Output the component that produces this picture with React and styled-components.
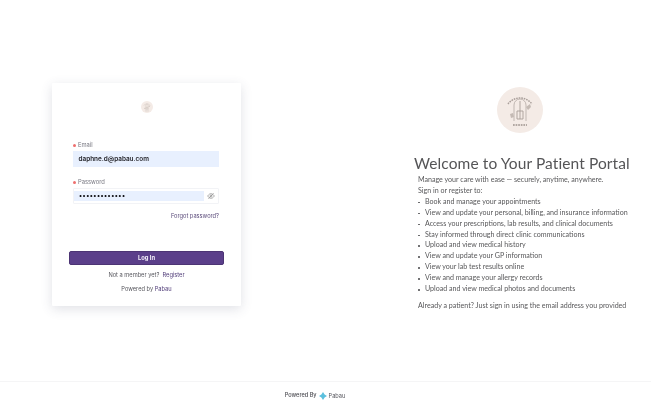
import React from 'react';
import styled, { createGlobalStyle } from 'styled-components';

const Global = createGlobalStyle`
  html, body { margin: 0; padding: 0; background: #fff; }
  body { font-family: Inter, "Liberation Sans", sans-serif; }
`;
const Page = styled.div`
  width: 651px; height: 408px; display: flex; flex-direction: column; overflow: hidden;
  filter: blur(0.3px);
`;
const Main = styled.main`
  height: 381px; display: flex; align-items: flex-start; box-sizing: border-box; padding: 83px 0 0 52px;
`;
const Card = styled.section`
  width: 189px; height: 223px; flex: none; box-sizing: border-box; background: #fff;
  box-shadow: 0 3px 12px rgba(60, 70, 100, 0.16); border-radius: 1px;
  padding: 18px 17px 0 17px; display: flex; flex-direction: column;
`;
const LogoRow = styled.div`display: flex; justify-content: center; height: 40px;`;
const Field = styled.div`
  display: flex; flex-direction: column; padding: 0 5px 0 4px; margin-bottom: 11px;
`;
const Label = styled.label`
  font-size: 5.8px; line-height: 8px; color: #777780; margin-bottom: 2px; display: flex; gap: 2px; align-items: center; height: 8px;
  &::before { content: ''; width: 3px; height: 3px; border-radius: 50%; background: #ee6f6e; }
`;
const EmailInput = styled.div`
  height: 16px; background: #e8f0fe; color: #25252b; font-size: 6.4px; font-weight: 600;
  line-height: 16px; padding-left: 5.5px;
`;
const PasswordBox = styled.div`
  height: 16px; border: 1px solid #f2f3f6; box-sizing: border-box; display: flex; align-items: center; border-radius: 1px;
`;
const PasswordFill = styled.div`
  flex: 1; height: 10px; background: #e8f0fe; color: #141418; font-size: 6.6px; font-weight: 700; line-height: 10px; letter-spacing: 0.45px; padding-left: 5px;
`;
const Eye = styled.span`
  width: 13px; flex: none; margin-right: 1px; display: flex; justify-content: center; color: #888;
`;
const Forgot = styled.a`
  align-self: flex-end; margin: -3px 5px 0 0; font-size: 5.7px; line-height: 8px; color: #5a4a7a;
`;
const LoginButton = styled.button`
  margin: 31px 0 0 0; height: 14px; width: 155px; padding: 0; border: 1px solid #4c3474; border-radius: 2px;
  background: #5b3f8a; color: #f4f0fa; font: 700 5.8px/12px Inter, sans-serif;
`;
const Foot = styled.p`
  margin: ${p => p.$mt}px 0 0; text-align: center; font-size: 5.7px; line-height: 8px; color: #55555c;
`;
const Link = styled.span`color: #4f3b78;`;
const Info = styled.section`
  margin: 4px 0 0 173px; width: 216px; flex: none; display: flex; flex-direction: column;
  color: #58585a; font-family: Lato, Inter, sans-serif;
`;
const BigLogo = styled.div`align-self: center; height: 46px; margin-bottom: 20px; margin-right: 5px;`;
const Title = styled.h1`
  margin: 0; font: 400 15.5px/21px Lato, Inter, sans-serif; color: #555557; white-space: nowrap; letter-spacing: 0.1px;
`;
const Body = styled.div`
  margin: 1px 0 0 4px; font-size: 7.1px; line-height: 10.9px; white-space: nowrap;
`;
const List = styled.ul`
  margin: 0; padding: 0; list-style: none;
`;
const Item = styled.li`
  position: relative; padding-left: 7px;
  &::before { content: ''; position: absolute; left: 0; top: 5px; width: 1.5px; height: 1.5px; background: #58585a; border-radius: 50%; }
`;
const Closing = styled.p`margin: 6.5px 0 0;`;
const Footer = styled.footer`
  height: 27px; border-top: 1px solid #f5f5f6; box-sizing: border-box; display: flex; align-items: center; justify-content: center; gap: 2px;
  color: #4c4c52; padding: 2px 21px 0 0;
`;
const FootPower = styled.span`font-size: 5.6px; font-weight: 500; position: relative; top: -1px;`;
const FootBrand = styled.span`font-size: 5.6px; color: #55555c;`;

const CircleLogo = ({ size }) => (
  <svg width={size} height={size} viewBox="0 0 46 46">
    <circle cx="23" cy="23" r="23" fill="#f4ebe6" />
    <path d="M11 17 A15 15 0 0 1 35 17" fill="none" stroke="#a89e99" strokeWidth="1.4" strokeDasharray="1.6 .9" />
    <path d="M17 34 V18 a6 6 0 0 1 12 0 V34" fill="none" stroke="#b4aaa5" strokeWidth=".8" />
    <path d="M23 14 v18 M20 24 h6 v8 h-6z" fill="none" stroke="#a89e99" strokeWidth=".9" />
    <path d="M29 20 l4 -3 1 3 -3 3z M13 27 l3 -1 1 4 -3 1z" fill="#c4bab4" />
    <path d="M16 38 H30" stroke="#9c928d" strokeWidth="1.3" strokeDasharray="1.7 .9" />
  </svg>
);

const items = [
  'Book and manage your appointments',
  'View and update your personal, billing, and insurance information',
  'Access your prescriptions, lab results, and clinical documents',
  'Stay informed through direct clinic communications',
  'Upload and view medical history',
  'View and update your GP information',
  'View your lab test results online',
  'View and manage your allergy records',
  'Upload and view medical photos and documents',
];

export default function App() {
  return (
    <Page>
      <Global />
      <Main>
        <Card>
          <LogoRow><CircleLogo size={12} /></LogoRow>
          <Field>
            <Label>Email</Label>
            <EmailInput>daphne.d@pabau.com</EmailInput>
          </Field>
          <Field>
            <Label>Password</Label>
            <PasswordBox>
              <PasswordFill>•••••••••••••</PasswordFill>
              <Eye>
                <svg width="8" height="8" viewBox="0 0 24 24" fill="none" stroke="currentColor" strokeWidth="2">
                  <path d="M2 12s4-7 10-7 10 7 10 7-4 7-10 7-10-7-10-7z" />
                  <circle cx="12" cy="12" r="3" />
                  <path d="M4 20 20 4" />
                </svg>
              </Eye>
            </PasswordBox>
          </Field>
          <Forgot>Forgot password?</Forgot>
          <LoginButton>Log In</LoginButton>
          <Foot $mt={5.5}>Not a member yet?&nbsp; <Link>Register</Link></Foot>
          <Foot $mt={6.5}>Powered by <Link>Pabau</Link></Foot>
        </Card>
        <Info>
          <BigLogo><CircleLogo size={46} /></BigLogo>
          <Title>Welcome to Your Patient Portal</Title>
          <Body>
            <div>Manage your care with ease — securely, anytime, anywhere.</div>
            <div>Sign in or register to:</div>
            <List>{items.map(t => <Item key={t}>{t}</Item>)}</List>
            <Closing>Already a patient? Just sign in using the email address you provided</Closing>
          </Body>
        </Info>
      </Main>
      <Footer>
        <FootPower>Powered By</FootPower>
        <svg width="8" height="8" viewBox="0 0 10 10">
          <path d="M5 0 L7 3 L10 5 L7 7 L5 10 L3 7 L0 5 L3 3Z" fill="#5cc0de" />
        </svg>
        <FootBrand>Pabau</FootBrand>
      </Footer>
    </Page>
  );
}
